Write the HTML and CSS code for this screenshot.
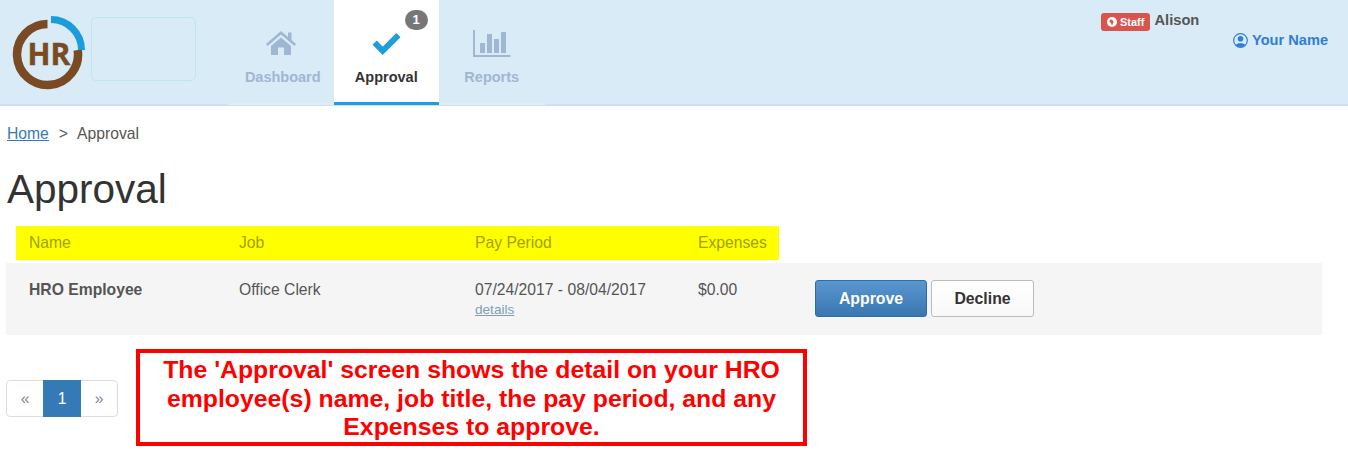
FILE: index.html
```html
<!DOCTYPE html>
<html lang="en">
<head>
    <meta charset="UTF-8">
    <title>Approval</title>
    <link rel="stylesheet" href="styles.css">
</head>
<body>
    <header class="topbar">
        <svg class="logo" width="74" height="76" viewBox="0 0 74 76">
            <path d="M35.500 10 A30.500 30.500 0 1 0 65.700 36" fill="none" stroke="#7a4a24" stroke-width="8.500"/>
            <path d="M39 5.500 A30.500 30.500 0 0 1 69.500 36" fill="none" stroke="#1b9cdc" stroke-width="7"/>
            <text x="15.500" y="51" class="logo-text">HR</text>
        </svg>
        <div class="logo-slot"></div>
        <nav class="tabs">
            <a class="tab">
                <svg width="30" height="26" viewBox="0 1 30 26"><path d="M15 1 L22 7 V2.500 H25.500 V10 L30 14 L28.500 16 L15 4.500 L1.500 16 L0 14 Z M5 16 L15 7.500 L25 16 V25 H18 V17.500 H12 V25 H5 Z" fill="#9fb7d2"/></svg>
                <span>Dashboard</span>
            </a>
            <a class="tab active">
                <span class="badge">1</span>
                <svg width="30" height="26" viewBox="0 0 30 26"><path d="M3.600 11.700 L11.700 19.800 L27.400 4.100" fill="none" stroke="#1e9fdc" stroke-width="6"/></svg>
                <span>Approval</span>
            </a>
            <a class="tab">
                <svg width="38" height="28" viewBox="0 0 38 28"><path d="M1 0 V26 H37.500" fill="none" stroke="#9fb7d2" stroke-width="2"/><path d="M7 13 H12 V23 H7 Z M14 4 H19 V23 H14 Z M21 9 H26 V23 H21 Z M28 2 H33 V23 H28 Z" fill="#9fb7d2"/></svg>
                <span>Reports</span>
            </a>
        </nav>
        <div class="user-area">
            <div class="user-line">
                <span class="staff">
                    <svg width="10" height="10" viewBox="0 0 10 10"><circle cx="5" cy="5" r="5" fill="#fff"/><path d="M3 2.500 L5.500 3 L6.500 5 L5 8.500 L4 6 L2.500 5 Z" fill="#d9534f"/></svg>
                    Staff
                </span>
                <span class="user-name">Alison</span>
            </div>
            <a class="profile">
                <svg width="15" height="15" viewBox="0 0 15 15"><circle cx="7.500" cy="7.500" r="6.800" fill="none" stroke="#2f7fd8" stroke-width="1.200"/><circle cx="7.500" cy="5.800" r="2.800" fill="#2f7fd8"/><path d="M2.800 12 C3.500 9.500 11.500 9.500 12.200 12 C10 14.500 5 14.500 2.800 12 Z" fill="#2f7fd8"/></svg>
                Your Name
            </a>
        </div>
    </header>

    <main class="content">
        <div class="breadcrumb"><a href="#">Home</a><span class="sep">&gt;</span>Approval</div>
        <h1>Approval</h1>

        <div class="head-row">
            <div class="col-name">Name</div>
            <div class="col-job">Job</div>
            <div class="col-period">Pay Period</div>
            <div class="col-expenses">Expenses</div>
        </div>
        <div class="data-row">
            <div class="col-name"><strong>HRO Employee</strong></div>
            <div class="col-job">Office Clerk</div>
            <div class="col-period">
                07/24/2017 - 08/04/2017
                <a class="details" href="#">details</a>
            </div>
            <div class="col-expenses">$0.00</div>
            <div class="actions">
                <button class="approve-btn">Approve</button>
                <button class="decline-btn">Decline</button>
            </div>
        </div>

        <div class="bottom">
            <ul class="pager">
                <li>&laquo;</li>
                <li class="current">1</li>
                <li>&raquo;</li>
            </ul>
            <div class="callout">The 'Approval' screen shows the detail on your HRO employee(s) name, job title, the pay period, and any Expenses to approve.</div>
        </div>
    </main>
</body>
</html>
```

FILE: styles.css
```css
* {
    box-sizing: border-box;
}

body {
    font-family: "Liberation Sans", Arial, sans-serif;
    font-size: 15.700px;
    line-height: 22px;
    color: #555;
    margin: 0;
    background: #fff;
}

.topbar {
    display: flex;
    height: 106px;
    padding-left: 12px;
    background: #d9ebf6;
    border-bottom: 2px solid #d0e0ec;
}

.logo {
    margin-top: 14px;
    flex: none;
}

.logo-text {
    font-family: "Open Sans", "Liberation Sans", sans-serif;
    font-size: 30px;
    font-weight: 700;
    fill: #7a4a24;
    stroke: #7a4a24;
    stroke-width: 0.500px;
}

.logo-slot {
    width: 105px;
    height: 64px;
    margin: 17px 0 0 5px;
    border: 1px solid #bfe6f0;
    border-radius: 5px;
}

.tabs {
    display: flex;
    margin-left: 32px;
}

.tab {
    position: relative;
    width: 105.500px;
    height: 105px;
    padding-top: 30px;
    display: flex;
    flex-direction: column;
    align-items: center;
    font-size: 14.500px;
    font-weight: 700;
    color: #9fb7d2;
    border-bottom: 2px solid #e0edf5;
}

.tab svg {
    height: 28px;
}

.tab span {
    margin-top: 8px;
}

.tab:first-child span {
    margin-left: 4px;
}

.tab.active {
    background: #fff;
    color: #333;
    border-bottom: 3px solid #1e9fdc;
}

.tab .badge {
    position: absolute;
    top: 10px;
    left: 71px;
    margin: 0;
    width: 23px;
    height: 20px;
    border-radius: 10px;
    background: #777;
    color: #fff;
    font-size: 13px;
    line-height: 20px;
    text-align: center;
}

.user-area {
    margin-left: auto;
    width: 247px;
    padding: 9px 20px 0 0;
}

.user-line {
    display: flex;
    align-items: flex-start;
    gap: 4px;
    font-size: 14.700px;
    font-weight: 700;
}

.staff {
    display: flex;
    align-items: center;
    gap: 3px;
    height: 18px;
    margin-top: 4px;
    padding: 0 6px;
    border-radius: 3px;
    background: #d9534f;
    color: #fff;
    font-size: 11px;
}

.profile {
    display: flex;
    align-items: center;
    justify-content: flex-end;
    gap: 4px;
    margin-top: -2px;
    font-size: 14.600px;
    font-weight: 700;
    color: #2f7fd8;
}

.content {
    padding: 0 26px 0 6px;
}

.breadcrumb {
    margin: 17px 0 0 1px;
    color: #555;
}

.breadcrumb a {
    color: #337ab7;
}

.sep {
    margin: 0 9px 0 10px;
}

h1 {
    margin: 22px 0 0 1px;
    font-size: 40.500px;
    font-weight: 400;
    line-height: 44px;
    color: #333;
}

.head-row {
    display: flex;
    width: 763px;
    height: 34px;
    margin: 15px 0 3px 10px;
    padding-left: 13px;
    align-items: center;
    background: #ff0;
    color: #a0a000;
}

.data-row {
    display: flex;
    height: 72px;
    padding: 16px 0 0 23px;
    background: #f5f5f5;
}

.col-name {
    flex: none;
    width: 210px;
}

.col-job {
    flex: none;
    width: 236px;
}

.col-period {
    flex: none;
    width: 223px;
}

.col-expenses {
    flex: none;
    width: 117px;
}

.head-row .col-expenses {
    width: 81px;
}

.details {
    display: block;
    margin-top: -1px;
    font-size: 13.600px;
    line-height: 20px;
    color: #7f9cb8;
    text-decoration: underline;
}

.actions {
    display: flex;
    gap: 4px;
    height: 37px;
    margin-top: 1px;
}

button {
    height: 37px;
    padding: 0;
    font-family: inherit;
    font-size: 15.800px;
    font-weight: 700;
    border-radius: 3px;
    cursor: pointer;
}

.approve-btn {
    width: 112px;
    color: #fff;
    background: linear-gradient(#5a96d0, #3a76b0);
    border: 1px solid #2e6da4;
}

.decline-btn {
    width: 103px;
    color: #333;
    background: linear-gradient(#fff, #f8f8f8);
    border: 1px solid #bbb;
}

.bottom {
    display: flex;
    align-items: flex-start;
    margin-top: 14px;
}

.pager {
    display: flex;
    width: 112px;
    height: 37px;
    margin: 31px 18px 0 0;
    padding: 0;
    list-style: none;
    color: #7a8ca0;
    border: 1px solid #ddd;
    border-radius: 4px;
}

.pager li {
    flex: 1;
    line-height: 35px;
    text-align: center;
}

.pager .current {
    flex: 0 0 38px;
    margin: -1px 0;
    line-height: 37px;
    background: #337ab7;
    color: #fff;
}

.callout {
    width: 671px;
    height: 97px;
    padding: 3px 20px 0;
    border: 4px solid #f00;
    color: #f00;
    font-size: 24.800px;
    font-weight: 700;
    line-height: 28.500px;
    text-align: center;
}
```
